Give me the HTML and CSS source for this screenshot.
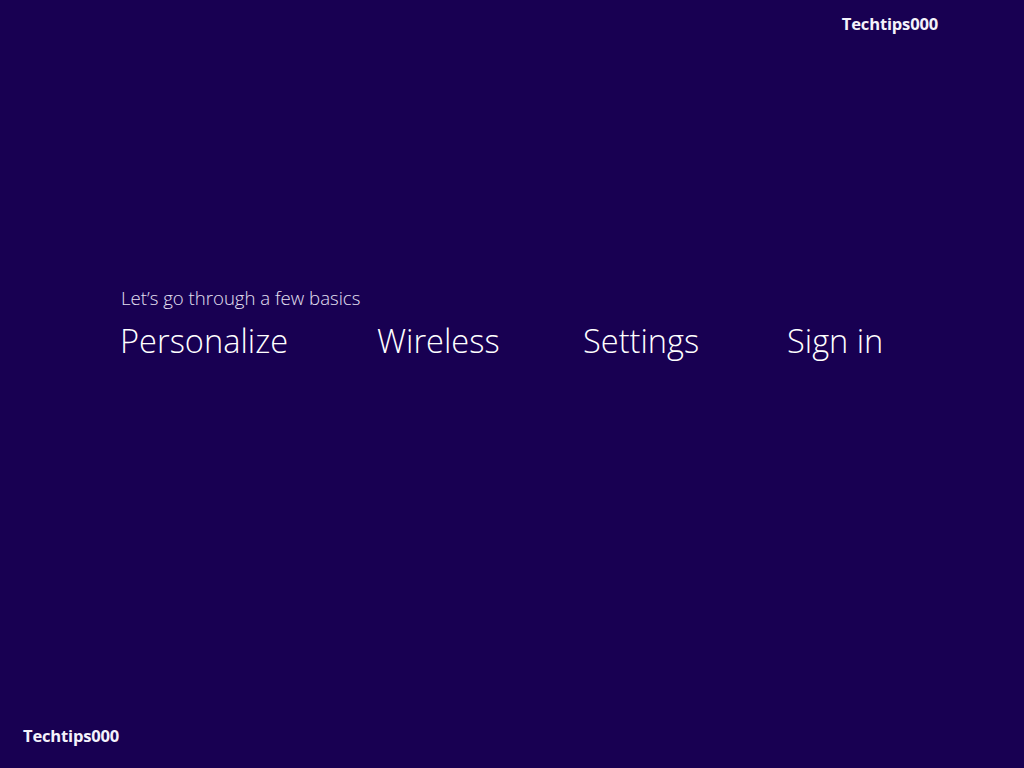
FILE: index.html
```html
<!DOCTYPE html>
<html lang="en">
<head>
<meta charset="utf-8">
<title>Let's go through a few basics</title>
<link rel="stylesheet" href="styles.css">
</head>
<body>
<div class="screen">
  <header class="top">
    <span class="mark">Techtips000</span>
  </header>
  <main class="intro">
    <p class="lead">Let’s go through a few basics</p>
    <ol class="steps">
      <li>Personalize</li>
      <li>Wireless</li>
      <li>Settings</li>
      <li>Sign in</li>
    </ol>
  </main>
  <footer class="bottom">
    <span class="mark">Techtips000</span>
  </footer>
</div>
</body>
</html>
```
FILE: styles.css
```css
html, body {
  margin: 0;
  padding: 0;
  background: #180052;
}
.screen {
  width: 1024px;
  height: 768px;
  display: flex;
  flex-direction: column;
  color: #ffffff;
  font-family: "Open Sans", "Segoe UI", sans-serif;
}
.top {
  display: flex;
  justify-content: flex-end;
  padding: 12px 86px 0 0;
  height: 30px;
}
.mark {
  font-family: "Open Sans", sans-serif;
  font-weight: 700;
  font-size: 16.6px;
  letter-spacing: -0.2px;
  color: #f4f2fb;
}
.intro {
  padding: 244px 0 0 120px;
  flex: 1;
}
.lead {
  margin: 0;
  font-weight: 300;
  font-size: 18.6px;
  line-height: 24px;
  padding-left: 1px;
  color: #e6e0f2;
}
.steps {
  list-style: none;
  margin: 8px 0 0;
  padding: 0;
  display: grid;
  grid-template-columns: 257px 206px 204px auto;
  font-weight: 300;
  font-size: 32.6px;
  line-height: 46px;
}
.bottom {
  padding: 0 0 16px 23px;
  height: 28px;
}
```
